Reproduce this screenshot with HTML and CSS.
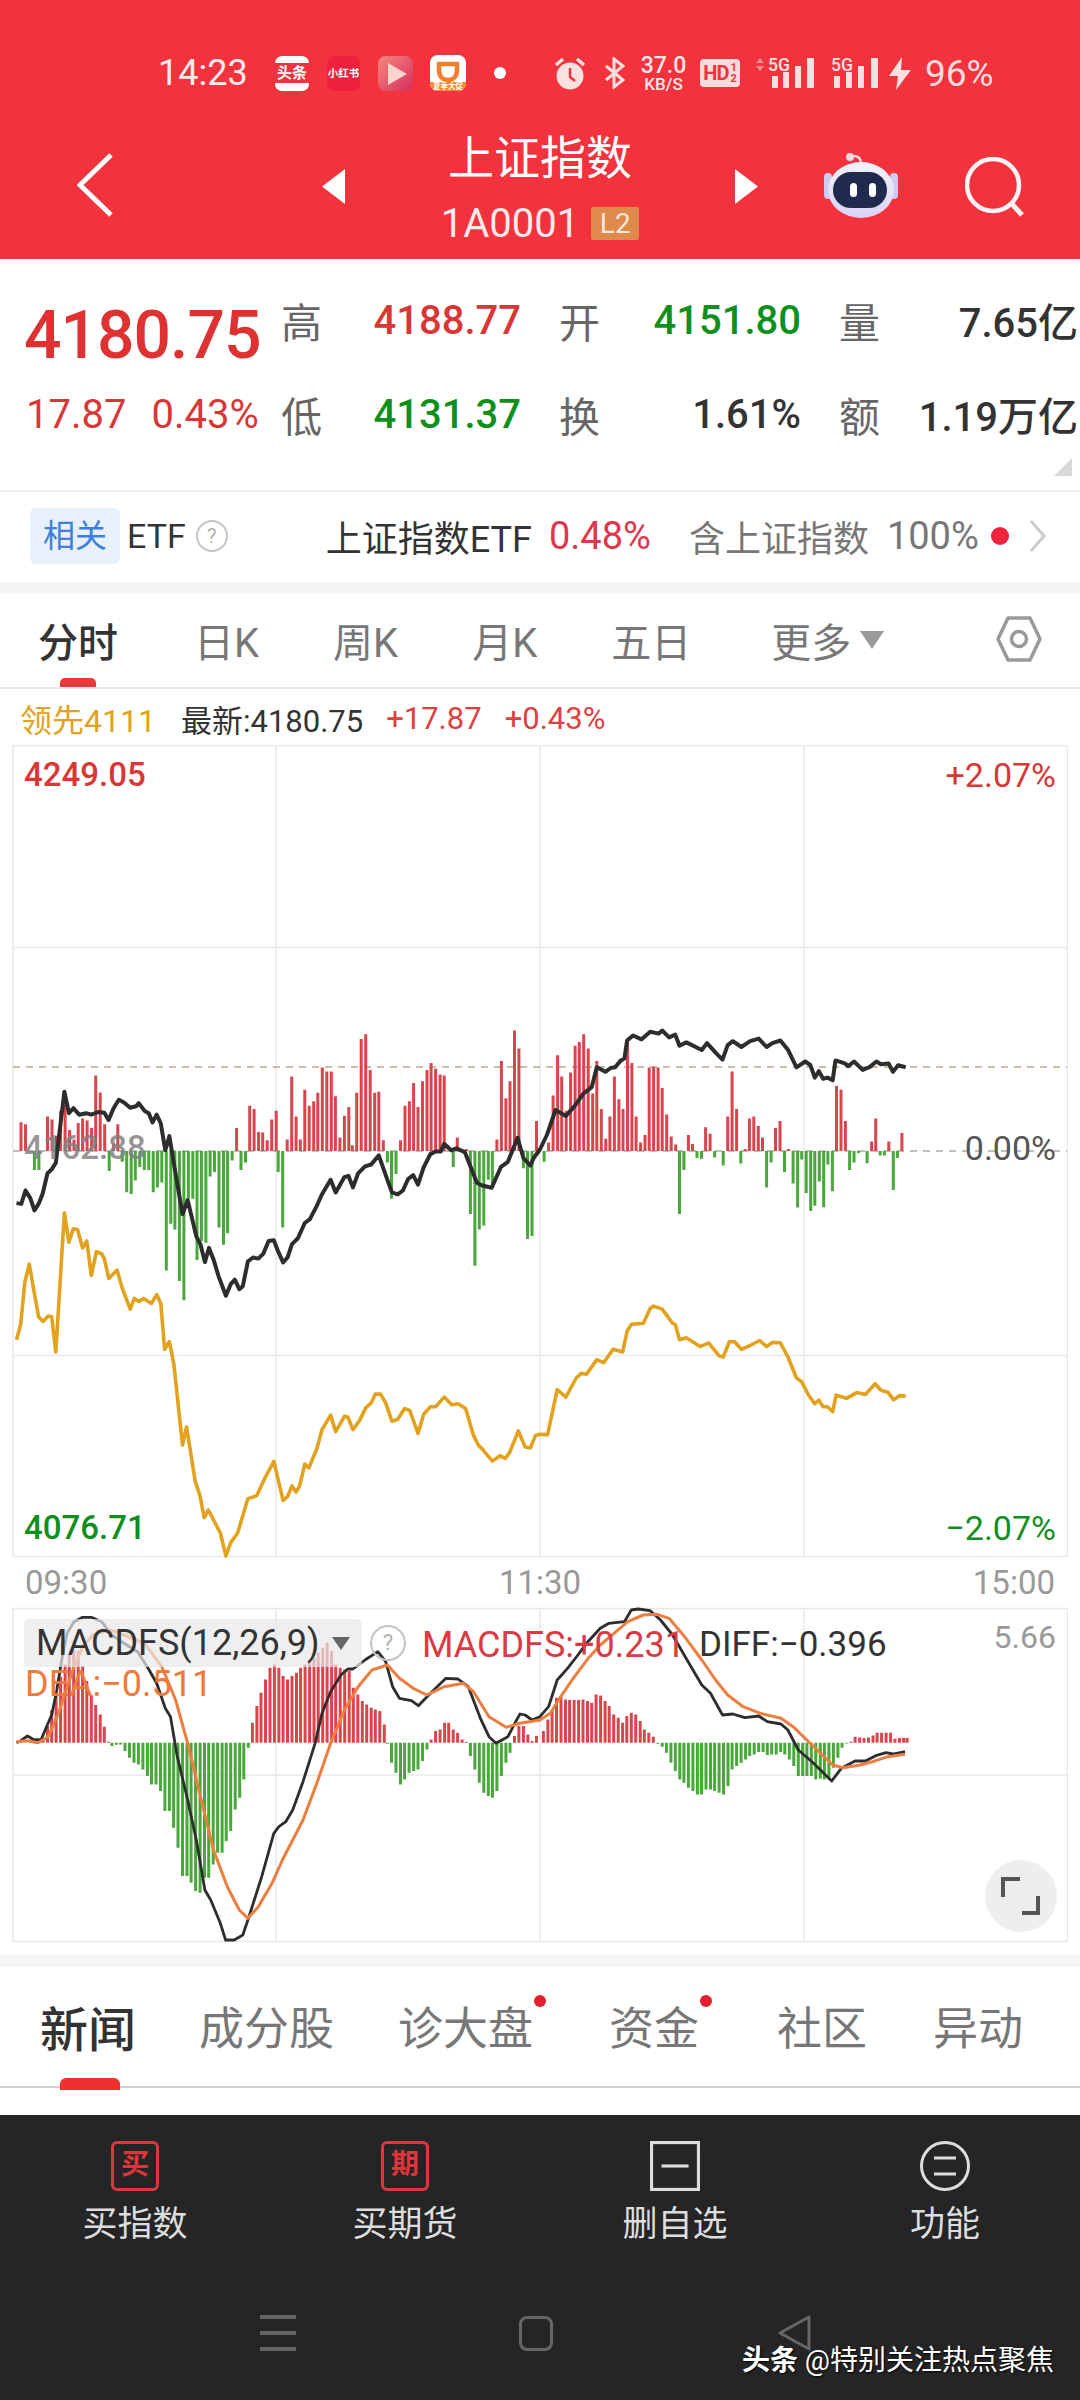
FILE: index.html
```html
<!DOCTYPE html>
<html lang="zh-CN">
<head>
    <meta charset="UTF-8">
    <meta name="viewport" content="width=device-width, initial-scale=1.0">
    <title>上证指数</title>
    <link rel="stylesheet" href="styles.css">
</head>
<body>
    <header class="header">
        <div class="statusbar">
            <span class="clock">14:23</span>
            <div class="app-toutiao"><span>头条</span></div>
            <div class="app-xhs">小红书</div>
            <svg class="app-play" viewBox="0 0 35 35">
                <defs>
                    <linearGradient id="playBg" x1="0" y1="0" x2="1" y2="1">
                        <stop offset="0" stop-color="#f8877c"/>
                        <stop offset="1" stop-color="#d42f5e"/>
                    </linearGradient>
                </defs>
                <rect width="35" height="35" rx="8" fill="url(#playBg)"/>
                <path d="M10 7 L29 18 L10 29 Z" fill="#fbd3cb"/>
            </svg>
            <svg class="app-didi" viewBox="0 0 36 36">
                <rect width="36" height="36" rx="8" fill="#fff"/>
                <path d="M9 9 H27 V15 C27 22 23 25 18 25 C13 25 9 22 9 15 Z" fill="none" stroke="#f2802e" stroke-width="4.5"/>
                <path d="M0 27 H36 V28 A8 8 0 0 1 28 36 H8 A8 8 0 0 1 0 28 Z" fill="#f2892e"/>
                <text x="18" y="34" text-anchor="middle" class="didi-text">夏季大促</text>
            </svg>
            <span class="status-dot"></span>
            <svg class="ic-alarm" viewBox="0 0 32 33">
                <circle cx="16" cy="19" r="13.5" fill="#fbe0e0"/>
                <path d="M16 11 V20 L21 24" fill="none" stroke="#f2323c" stroke-width="2.5"/>
                <path d="M2 8 L9 2 M30 8 L23 2" stroke="#fbe0e0" stroke-width="3.5" fill="none"/>
            </svg>
            <svg class="ic-bt" viewBox="0 0 21 32">
                <path d="M2 9 L19 23 L10 30 V2 L19 9 L2 23" fill="none" stroke="#fbe0e0" stroke-width="3"/>
            </svg>
            <div class="speed"><span class="speed-num">37.0</span><span class="speed-unit">KB/S</span></div>
            <div class="hd">HD<span class="hd-frac"><i>1</i><i>2</i></span></div>
            <svg class="ic-sig-a" viewBox="0 -6 60 38">
                <path d="M1 6 L5 1 L9 6 Z M1 9 L5 14 L9 9 Z" fill="#f78d92"/>
                <text x="13" y="14" class="sig-text" textLength="22" lengthAdjust="spacingAndGlyphs">5G</text>
                <rect x="17" y="19" width="6" height="12" fill="#fbe0e0"/>
                <rect x="28" y="15" width="6" height="16" fill="#fbe0e0"/>
                <rect x="40" y="9" width="6" height="22" fill="#fbe0e0"/>
                <rect x="52" y="1" width="7" height="30" fill="#fbe0e0"/>
            </svg>
            <svg class="ic-sig-b" viewBox="0 -6 47 38">
                <text x="0" y="14" class="sig-text" textLength="22" lengthAdjust="spacingAndGlyphs">5G</text>
                <rect x="3" y="19" width="6" height="12" fill="#fbe0e0"/>
                <rect x="15" y="15" width="6" height="16" fill="#fbe0e0"/>
                <rect x="27" y="9" width="6" height="22" fill="#fbe0e0"/>
                <rect x="40" y="1" width="7" height="30" fill="#fbe0e0"/>
            </svg>
            <svg class="ic-bolt" viewBox="0 0 24 33">
                <path d="M14 0 L1 19 H10 L8 33 L23 13 H13 Z" fill="#fbe0e0"/>
            </svg>
            <span class="battery">96%</span>
        </div>

        <div class="titlebar">
            <svg class="back" viewBox="0 0 36 64">
                <path d="M34 2 L3 32 L34 62" fill="none" stroke="#fff" stroke-width="5"/>
            </svg>
            <svg class="arrow arrow-left" viewBox="0 0 23 35"><path d="M23 0 V35 L0 17.5 Z" fill="#fff"/></svg>
            <div class="title-block">
                <div class="title">上证指数</div>
                <div class="code-row">
                    <span class="code">1A0001</span>
                    <span class="badge-l2">L2</span>
                </div>
            </div>
            <svg class="arrow" viewBox="0 0 23 35"><path d="M0 0 V35 L23 17.5 Z" fill="#fff"/></svg>
            <svg class="robot" viewBox="0 0 74 66">
                <defs>
                    <linearGradient id="robotHead" x1="0" y1="0" x2="0" y2="1">
                        <stop offset="0" stop-color="#f4f2fc"/>
                        <stop offset="1" stop-color="#d9d4f4"/>
                    </linearGradient>
                </defs>
                <circle cx="26" cy="5" r="4" fill="#f3d8e0"/>
                <path d="M29 4 C34 4 37 6 37 11" fill="none" stroke="#f3d8e0" stroke-width="2.5"/>
                <rect x="0" y="21" width="8" height="26" rx="4" fill="#cfcaf0"/>
                <rect x="66" y="21" width="8" height="26" rx="4" fill="#cfcaf0"/>
                <ellipse cx="37" cy="38" rx="33" ry="28" fill="url(#robotHead)"/>
                <rect x="9" y="20" width="54" height="36" rx="18" fill="#1f2a4e"/>
                <rect x="26" y="31" width="7" height="14" rx="3.5" fill="#fff"/>
                <rect x="45" y="31" width="7" height="14" rx="3.5" fill="#fff"/>
            </svg>
            <svg class="search" viewBox="0 0 60 60">
                <circle cx="28" cy="28" r="26" fill="none" stroke="#fff2f2" stroke-width="4.5"/>
                <path d="M47 47 L57 58" stroke="#fff2f2" stroke-width="5"/>
            </svg>
        </div>
    </header>

    <section class="quote">
        <div class="quote-grid">
            <div class="price-main">4180.75</div>
            <div class="q-label">高</div>
            <div class="q-val up">4188.77</div>
            <div class="q-label gap">开</div>
            <div class="q-val down">4151.80</div>
            <div class="q-label gap">量</div>
            <div class="q-val">7.65亿</div>

            <div class="price-change"><span>17.87</span><span>0.43%</span></div>
            <div class="q-label">低</div>
            <div class="q-val down">4131.37</div>
            <div class="q-label gap">换</div>
            <div class="q-val">1.61%</div>
            <div class="q-label gap">额</div>
            <div class="q-val">1.19万亿</div>
        </div>
        <span class="corner"></span>
    </section>

    <section class="etf-row">
        <span class="etf-tag">相关</span>
        <span class="etf-name">ETF</span>
        <span class="help help-sm">?</span>
        <span class="etf-title">上证指数ETF</span>
        <span class="etf-pct">0.48%</span>
        <span class="etf-note">含上证指数</span>
        <span class="etf-share">100%</span>
        <span class="etf-dot"></span>
        <svg class="etf-more" viewBox="0 0 17 32"><path d="M2 1 L15 16 L2 31" fill="none" stroke="#ccc" stroke-width="3"/></svg>
    </section>

    <div class="band"></div>

    <nav class="chart-tabs">
        <span class="chart-tab active">分时</span>
        <span class="chart-tab tab-day">日K</span>
        <span class="chart-tab">周K</span>
        <span class="chart-tab">月K</span>
        <span class="chart-tab tab-five">五日</span>
        <span class="chart-tab tab-more">更多<i class="more-arrow"></i></span>
        <svg class="hex" viewBox="0 0 46 46">
            <path d="M12 2 H34 L44 23 L34 44 H12 L2 23 Z" fill="none" stroke="#999" stroke-width="3.5" stroke-linejoin="round"/>
            <circle cx="23" cy="23" r="7.5" fill="none" stroke="#999" stroke-width="3.5"/>
        </svg>
    </nav>

    <div class="legend">
        <span class="legend-lead">领先4111</span>
        <span class="legend-last">最新:4180.75</span>
        <span class="legend-up">+17.87</span>
        <span class="legend-up">+0.43%</span>
    </div>

    <div class="chart chart-main">
        <svg class="chart-svg" width="1056" height="813" viewBox="12 745 1056 813">
            <g class="grid-lines">
                <path d="M13 745.5 H1067.5 V1556.5 H13 Z M13 947.5 H1067 M13 1355.5 H1067 M276 745 V1557 M540 745 V1557 M804 745 V1557"/>
            </g>
            <path class="dash-top" d="M13 1067 H1067"/>
            <path class="dash-mid" d="M13 1151 H1067"/>
            <path id="volUp" class="bar-up"/>
            <path id="volDown" class="bar-down"/>
            <polyline id="lineOrange" class="line-gold"/>
            <polyline id="lineBlack" class="line-black"/>
        </svg>
        <span class="label label-top up">4249.05</span>
        <span class="label label-top label-right up">+2.07%</span>
        <span class="label label-mid grey">4162.88</span>
        <span class="label label-mid label-right dark">0.00%</span>
        <span class="label label-low down">4076.71</span>
        <span class="label label-low label-right down">−2.07%</span>
    </div>

    <div class="time-axis">
        <span>09:30</span>
        <span>11:30</span>
        <span>15:00</span>
    </div>

    <div class="chart chart-macd">
        <svg class="chart-svg" width="1056" height="336" viewBox="12 1607 1056 336">
            <g class="grid-lines">
                <path d="M13 1608.5 H1067.5 V1941.5 H13 Z M13 1775 H1067 M276 1608 V1942 M540 1608 V1942 M804 1608 V1942"/>
            </g>
            <path id="macdUp" class="bar-up"/>
            <path id="macdDown" class="bar-down"/>
            <polyline id="macdBlack" class="line-thin-black"/>
            <polyline id="macdOrange" class="line-thin-orange"/>
        </svg>
        <div class="macd-pill">MACDFS(12,26,9)<i class="pill-arrow"></i></div>
        <span class="help help-lg">?</span>
        <span class="macd-val macd-fs">MACDFS:+0.231</span>
        <span class="macd-val macd-diff">DIFF:−0.396</span>
        <span class="macd-val macd-dea">DEA:−0.511</span>
        <span class="macd-max">5.66</span>
        <div class="expand">
            <svg viewBox="0 0 40 40" width="40" height="40">
                <path d="M2 21 V3 H19 M21 37 H37 V20" fill="none" stroke="#555" stroke-width="4"/>
            </svg>
        </div>
    </div>

    <div class="band band-low"></div>

    <nav class="news-tabs">
        <span class="news-tab active">新闻</span>
        <span class="news-tab">成分股</span>
        <span class="news-tab has-dot">诊大盘</span>
        <span class="news-tab has-dot">资金</span>
        <span class="news-tab">社区</span>
        <span class="news-tab">异动</span>
    </nav>

    <footer class="bottom">
        <div class="actions">
            <div class="action">
                <span class="action-box">买</span>
                <span class="action-label">买指数</span>
            </div>
            <div class="action">
                <span class="action-box">期</span>
                <span class="action-label">买期货</span>
            </div>
            <div class="action">
                <svg class="action-svg" viewBox="0 0 48 48">
                    <rect x="1.5" y="1.5" width="45" height="45" fill="none" stroke="#ddd" stroke-width="3"/>
                    <path d="M11 24 H37" stroke="#ddd" stroke-width="3"/>
                </svg>
                <span class="action-label">删自选</span>
            </div>
            <div class="action">
                <svg class="action-svg" viewBox="0 0 50 50">
                    <circle cx="25" cy="25" r="23.5" fill="none" stroke="#ddd" stroke-width="3"/>
                    <path d="M14 17 H36 M14 33 H36" stroke="#ddd" stroke-width="3"/>
                </svg>
                <span class="action-label">功能</span>
            </div>
        </div>
        <div class="sysnav">
            <svg class="sys-menu" viewBox="0 0 36 36"><path d="M0 2 H36 M0 18 H36 M0 34 H36" stroke="#666" stroke-width="4"/></svg>
            <span class="sys-home"></span>
            <svg class="sys-back" viewBox="0 0 34 36"><path d="M32 2 V34 L3 18 Z" fill="none" stroke="#666" stroke-width="3" stroke-linejoin="round"/></svg>
        </div>
        <div class="watermark"><b>头条</b> @特别关注热点聚焦</div>
    </footer>

    <script src="chart.js"></script>
</body>
</html>
```

FILE: styles.css
```css
* {
    box-sizing: border-box;
}

body {
    margin: 0;
    width: 1080px;
    background-color: #fff;
    color: #333;
    font-family: Roboto, "Noto Sans CJK SC", sans-serif;
}

i {
    font-style: normal;
}

.up {
    color: #d93636;
}

.down {
    color: #0f8f1c;
}

/* header */
.header {
    height: 259px;
    padding-top: 50px;
    background-color: #f2323c;
    color: #fff;
}

.statusbar {
    display: flex;
    align-items: center;
    height: 46px;
    padding-left: 158px;
}

.clock {
    width: 91px;
    font-size: 36px;
    color: #fdeaea;
}

.app-toutiao {
    display: flex;
    align-items: center;
    width: 34px;
    height: 35px;
    margin-left: 26px;
    background-color: #fff;
    border-radius: 7px;
    overflow: hidden;
}

.app-toutiao span {
    width: 100%;
    height: 20px;
    background-color: #ee3340;
    font-size: 15px;
    font-weight: 700;
    line-height: 20px;
    text-align: center;
    white-space: nowrap;
}

.app-xhs {
    width: 33px;
    height: 35px;
    margin-left: 18px;
    background-color: #f0213f;
    border-radius: 7px;
    font-size: 10.5px;
    font-weight: 700;
    line-height: 35px;
    text-align: center;
    white-space: nowrap;
}

.app-play {
    width: 35px;
    height: 35px;
    margin-left: 18px;
}

.app-didi {
    width: 36px;
    height: 36px;
    margin-left: 17px;
}

.didi-text {
    font-size: 7.5px;
    font-weight: 700;
    fill: #fff;
}

.status-dot {
    width: 12px;
    height: 12px;
    margin-left: 28px;
    background-color: #fff;
    border-radius: 50%;
}

.ic-alarm {
    width: 32px;
    height: 33px;
    margin-left: 48px;
}

.ic-bt {
    width: 21px;
    height: 32px;
    margin-left: 18px;
}

.speed {
    display: flex;
    flex-direction: column;
    align-items: center;
    width: 45px;
    margin-left: 16px;
    color: #fbe6e6;
}

.speed-num {
    font-size: 23px;
    font-weight: 500;
    line-height: 22px;
}

.speed-unit {
    font-size: 17px;
    font-weight: 500;
    line-height: 14px;
}

.hd {
    display: flex;
    align-items: center;
    justify-content: center;
    width: 40px;
    height: 28px;
    margin-left: 14px;
    background-color: #fbdcdc;
    border-radius: 4px;
    color: #f2323c;
    font-size: 20px;
    font-weight: 700;
    letter-spacing: -1px;
}

.hd-frac {
    display: flex;
    flex-direction: column;
    margin-left: 2px;
    font-size: 11px;
    line-height: 11px;
    letter-spacing: 0;
}

.ic-sig-a {
    width: 60px;
    height: 38px;
    margin-left: 15px;
    margin-top: -6px;
}

.ic-sig-b {
    width: 47px;
    height: 38px;
    margin-left: 16px;
    margin-top: -6px;
}

.sig-text {
    font-size: 18px;
    font-weight: 500;
    fill: #fbe0e0;
}

.ic-bolt {
    width: 24px;
    height: 33px;
    margin-left: 10px;
}

.battery {
    margin-left: 13px;
    font-size: 37px;
    color: #fbdcdc;
}

.titlebar {
    display: flex;
    align-items: flex-start;
    height: 159px;
    margin-top: 4px;
    padding-left: 77px;
}

.back {
    flex: none;
    width: 36px;
    height: 64px;
    margin-top: 53px;
}

.arrow {
    flex: none;
    width: 23px;
    height: 35px;
    margin-top: 69px;
}

.arrow-left {
    margin-left: 209px;
}

.title-block {
    flex: none;
    width: 390px;
    margin-top: 32px;
    text-align: center;
}

.title {
    font-size: 46px;
    line-height: 52px;
}

.code-row {
    display: flex;
    align-items: center;
    justify-content: center;
    gap: 12px;
    height: 34px;
    margin-top: 22px;
}

.code {
    font-size: 40px;
    color: #fdeaea;
}

.badge-l2 {
    width: 48px;
    height: 33px;
    background-color: #dd8a4c;
    border-radius: 2px;
    font-size: 28px;
    line-height: 33px;
    color: #fbe6d8;
}

.robot {
    flex: none;
    width: 74px;
    height: 66px;
    margin-left: 66px;
    margin-top: 52px;
}

.search {
    flex: none;
    width: 60px;
    height: 60px;
    margin-left: 67px;
    margin-top: 57px;
}

/* quote block */
.quote {
    position: relative;
    height: 233px;
    padding: 14px 0 0 24px;
    border-bottom: 2px solid #ececec;
}

.quote-grid {
    display: grid;
    grid-template-columns: 257px 41px 199px 80px 200px 79px 198px;
    grid-template-rows: 94px 94px;
    align-items: center;
}

.q-label {
    font-size: 41px;
    color: #666;
    white-space: nowrap;
}

.q-label.gap {
    margin-left: 38px;
    margin-right: -38px;
}

.q-val {
    font-size: 40px;
    font-weight: 500;
    text-align: right;
    white-space: nowrap;
}

.price-main {
    margin-top: 31px;
    font-size: 66px;
    font-weight: 500;
    line-height: 64px;
    letter-spacing: -1px;
    color: #de3232;
    white-space: nowrap;
}

.price-change {
    display: flex;
    gap: 25px;
    padding-left: 2px;
    font-size: 40px;
    font-weight: 400;
    color: #d93636;
    white-space: nowrap;
}

.corner {
    position: absolute;
    right: 8px;
    bottom: 14px;
    border-left: 18px solid transparent;
    border-bottom: 18px solid #d8d8d8;
}

/* etf row */
.etf-row {
    display: flex;
    align-items: center;
    height: 90px;
    padding: 0 0 2px 30px;
    white-space: nowrap;
}

.etf-tag {
    width: 90px;
    height: 56px;
    background-color: #e8f0fb;
    border-radius: 6px;
    font-size: 32px;
    line-height: 56px;
    text-align: center;
    color: #3f7fdf;
}

.etf-name {
    margin-left: 7px;
    font-size: 34px;
    color: #333;
}

.help {
    display: block;
    border: 2px solid #c4c4c4;
    border-radius: 50%;
    text-align: center;
    color: #b0b0b0;
}

.help-sm {
    width: 32px;
    height: 32px;
    margin-left: 10px;
    font-size: 20px;
    line-height: 28px;
}

.etf-title {
    margin-left: 98px;
    font-size: 36px;
    color: #333;
}

.etf-pct {
    margin-left: 17px;
    font-size: 38px;
    color: #e0364e;
}

.etf-note {
    margin-left: 38px;
    font-size: 36px;
    color: #777;
}

.etf-share {
    margin-left: 18px;
    font-size: 38px;
    color: #777;
}

.etf-dot {
    width: 18px;
    height: 18px;
    margin-left: 12px;
    background-color: #f0233a;
    border-radius: 50%;
}

.etf-more {
    width: 17px;
    height: 32px;
    margin-left: 20px;
}

.band {
    height: 11px;
    background-color: #f5f5f5;
}

/* chart tabs */
.chart-tabs {
    display: flex;
    align-items: center;
    gap: 74px;
    height: 96px;
    padding-left: 38px;
    border-bottom: 2px solid #eaeaea;
}

.chart-tab {
    position: relative;
    font-size: 40px;
    color: #777;
    white-space: nowrap;
}

.chart-tab.active {
    color: #333;
    font-weight: 500;
}

.chart-tab.active::after {
    content: "";
    position: absolute;
    left: 22px;
    bottom: -18px;
    width: 36px;
    height: 9px;
    background-color: #e83a3a;
    border-radius: 5px 5px 0 0;
}

.tab-day {
    margin-left: 2px;
}

.tab-five {
    margin-left: 0;
}

.tab-more {
    display: flex;
    align-items: center;
    margin-left: 6px;
}

.more-arrow {
    width: 0;
    height: 0;
    margin: 0 0 0 9px;
    border-left: 12px solid transparent;
    border-right: 12px solid transparent;
    border-top: 18px solid #999;
}

.hex {
    width: 46px;
    height: 46px;
    margin-left: 38px;
    margin-top: -2px;
}

/* legend */
.legend {
    display: flex;
    align-items: center;
    height: 56px;
    padding: 2px 0 0 20px;
    font-size: 31px;
    white-space: nowrap;
}

.legend-lead {
    font-size: 32px;
    color: #e2a21e;
}

.legend-last {
    margin-left: 25px;
    color: #333;
}

.legend-up {
    margin-left: 23px;
    color: #e04040;
}

/* charts */
.chart {
    position: relative;
    width: 1056px;
    margin-left: 12px;
}

.chart-main {
    height: 813px;
}

.chart-macd {
    height: 336px;
}

.chart-svg {
    display: block;
}

.grid-lines path {
    fill: none;
    stroke: #e8e8e8;
    stroke-width: 1.5;
}

.dash-top {
    fill: none;
    stroke: #b9a98a;
    stroke-width: 1.5;
    stroke-dasharray: 7 6;
}

.dash-mid {
    fill: none;
    stroke: #aaa;
    stroke-width: 1.5;
    stroke-dasharray: 7 6;
}

.bar-up {
    fill: none;
    stroke: #d9454d;
    stroke-width: 3;
}

.bar-down {
    fill: none;
    stroke: #48a83a;
    stroke-width: 3;
}

.line-black,
.line-gold,
.line-thin-black,
.line-thin-orange {
    fill: none;
    stroke-linejoin: round;
}

.line-black {
    stroke: #2d2d2d;
    stroke-width: 4;
}

.line-gold {
    stroke: #e2a21e;
    stroke-width: 3.6;
}

.line-thin-black {
    stroke: #2d2d2d;
    stroke-width: 2.8;
}

.line-thin-orange {
    stroke: #ee7d40;
    stroke-width: 3;
}

.label {
    position: absolute;
    left: 12px;
    font-size: 33px;
    font-weight: 500;
    line-height: 40px;
    white-space: nowrap;
}

.label-right {
    left: auto;
    right: 12px;
    font-size: 34px;
    font-weight: 400;
}

.label-top {
    top: 10px;
}

.label-mid {
    top: 383px;
}

.label-low {
    top: 763px;
}

.grey {
    color: rgba(130, 130, 130, 0.85);
}

.dark {
    color: #555;
}

.time-axis {
    display: flex;
    justify-content: space-between;
    height: 49px;
    padding: 0 25px;
    font-size: 33px;
    line-height: 49px;
    color: #999;
}

.macd-pill {
    position: absolute;
    left: 12px;
    top: 12px;
    display: flex;
    align-items: center;
    width: 338px;
    height: 48px;
    padding-left: 12px;
    background-color: rgba(232, 232, 232, 0.7);
    border-radius: 5px;
    font-size: 36px;
    color: #333;
    white-space: nowrap;
}

.pill-arrow {
    margin-left: 12px;
    border-left: 9px solid transparent;
    border-right: 9px solid transparent;
    border-top: 13px solid #666;
}

.help-lg {
    position: absolute;
    left: 358px;
    top: 18px;
    width: 36px;
    height: 36px;
    font-size: 22px;
    line-height: 32px;
}

.macd-val {
    position: absolute;
    font-size: 36px;
    line-height: 40px;
    white-space: nowrap;
}

.macd-fs {
    left: 410px;
    top: 18px;
    color: #d93a44;
}

.macd-diff {
    left: 687px;
    top: 18px;
    font-size: 35px;
    color: #333;
}

.macd-dea {
    left: 13px;
    top: 57px;
    color: #ee7a3c;
}

.macd-max {
    position: absolute;
    right: 12px;
    top: 10px;
    font-size: 32px;
    line-height: 40px;
    color: #999;
}

.expand {
    position: absolute;
    left: 973px;
    top: 253px;
    display: flex;
    align-items: center;
    justify-content: center;
    width: 72px;
    height: 72px;
    background-color: #eee;
    border-radius: 50%;
}

.band-low {
    height: 12px;
    margin-top: 12px;
}

/* news tabs */
.news-tabs {
    display: flex;
    align-items: center;
    height: 121px;
    padding: 0 0 2px 40px;
    border-bottom: 2px solid #cfcfcf;
    white-space: nowrap;
}

.news-tab {
    position: relative;
    margin-right: 66px;
    font-size: 45px;
    color: #777;
}

.news-tab:nth-child(2) {
    margin-right: 64px;
}

.news-tab:nth-child(3) {
    margin-right: 76px;
}

.news-tab:nth-child(4) {
    margin-right: 78px;
}

.news-tab:nth-child(5) {
    margin-right: 66px;
}

.news-tab.active {
    margin-right: 63px;
    font-size: 48px;
    color: #333;
    font-weight: 500;
}

.news-tab.active::after {
    content: "";
    position: absolute;
    left: 20px;
    bottom: -29px;
    width: 60px;
    height: 12px;
    background-color: #f0302e;
    border-radius: 6px 6px 0 0;
}

.news-tab.has-dot::after {
    content: "";
    position: absolute;
    right: -13px;
    top: 2px;
    width: 12px;
    height: 12px;
    background-color: #e0202c;
    border-radius: 50%;
}

/* bottom bar */
.bottom {
    position: relative;
    height: 285px;
    margin-top: 27px;
    background-color: #252525;
}

.actions {
    display: grid;
    grid-template-columns: repeat(4, 270px);
    height: 200px;
    padding-top: 26px;
}

.action {
    display: flex;
    flex-direction: column;
    align-items: center;
}

.action-box {
    width: 48px;
    height: 50px;
    border: 3px solid #d8383e;
    border-radius: 6px;
    font-size: 28px;
    font-weight: 700;
    line-height: 42px;
    text-align: center;
    color: #e0343c;
}

.action-svg {
    width: 50px;
    height: 50px;
}

.action-label {
    margin-top: 12px;
    font-size: 35px;
    line-height: 44px;
    color: #ddd;
}

.sysnav {
    display: flex;
    align-items: center;
    height: 36px;
    padding-left: 260px;
}

.sys-menu {
    width: 36px;
    height: 36px;
}

.sys-home {
    width: 34px;
    height: 35px;
    margin-left: 223px;
    border: 3px solid #666;
    border-radius: 8px;
}

.sys-back {
    width: 34px;
    height: 36px;
    margin-left: 224px;
}

.watermark {
    position: absolute;
    right: 26px;
    top: 227px;
    font-size: 28px;
    line-height: 38px;
    color: #fff;
    text-shadow: 1px 1px 2px #000;
    white-space: nowrap;
}
```

FILE: chart.js
```js
// series below are read off the picture at 2.904 px per x unit
const SX = 2.904;

function toX(x, half) {
    return (half === 1 ? 540 : 0) + x / SX;
}

function parse(str) {
    return str.trim().split(/\s+/).map(function (p) {
        return p.split(',').map(Number);
    });
}

function linePoints(left, right, yOf) {
    const a = parse(left).map(function (p) {
        return toX(p[0], 0).toFixed(1) + ',' + yOf(p[1]).toFixed(1);
    });
    const b = parse(right).map(function (p) {
        return toX(p[0], 1).toFixed(1) + ',' + yOf(p[1]).toFixed(1);
    });
    return a.concat(b).join(' ');
}

function drawBars(left, right, base, sy, upId, downId) {
    let up = '';
    let down = '';
    [left, right].forEach(function (list, half) {
        parse(list).forEach(function (p) {
            const seg = 'M' + toX(p[0], half).toFixed(1) + ' ' + base + 'V' + (base - p[1] / sy).toFixed(1);
            if (p[1] > 0) {
                up += seg;
            } else {
                down += seg;
            }
        });
    });
    document.getElementById(upId).setAttribute('d', up);
    document.getElementById(downId).setAttribute('d', down);
}

// price panel
const mainY = function (y) { return 980 + y / 2.613; };

document.getElementById('lineBlack').setAttribute('points', linePoints(
    '48,583 62,585 74,550 88,570 100,602 112,585 124,558 138,505 150,495 162,478 175,380 187,292 200,348 213,335 230,352 250,348 265,352 285,345 303,347 315,366 330,335 345,313 360,320 378,334 395,330 403,322 420,342 432,348 443,372 455,352 467,375 480,445 492,408 505,480 530,612 545,575 570,670 582,690 595,737 607,700 620,730 635,775 656,825 670,795 682,783 695,808 705,800 720,735 735,725 750,728 765,715 780,682 795,680 808,710 822,738 835,725 848,690 865,675 885,635 900,625 920,590 935,560 960,522 975,555 1000,515 1012,512 1025,542 1040,505 1060,487 1078,482 1100,458 1120,510 1138,555 1155,560 1170,550 1185,520 1200,510 1214,535 1230,490 1250,455 1265,448 1280,448 1290,428 1310,445 1325,440 1350,450 1385,530 1400,537 1428,543 1455,488 1475,475 1503,412 1520,465 1540,485 1550,465 1568,443',
    '20,405 45,340 75,355 100,330 125,298 150,280 165,228 190,240 205,230 218,228 235,210 245,205 253,158 270,145 295,155 320,135 345,140 355,132 375,150 393,143 405,172 425,163 470,183 485,165 510,190 530,208 545,170 560,160 585,175 610,160 635,153 658,175 675,165 698,158 720,182 745,228 770,213 785,222 798,255 810,238 822,258 835,255 850,262 858,210 885,218 895,225 912,213 937,235 958,227 977,213 990,220 1012,218 1025,240 1040,223 1062,228',
    mainY
));

document.getElementById('lineOrange').setAttribute('points', linePoints(
    '48,940 60,900 72,790 85,742 100,820 112,880 125,892 140,878 150,880 162,972 187,608 200,685 213,650 225,652 240,700 252,682 265,772 280,710 295,715 303,728 316,780 340,758 355,805 378,860 390,832 403,840 417,832 440,845 455,822 467,845 478,965 492,945 505,1005 530,1215 542,1168 567,1310 580,1345 593,1405 605,1385 640,1445 656,1505 670,1470 690,1445 720,1355 745,1348 770,1300 795,1258 822,1360 835,1350 848,1322 860,1338 870,1322 885,1265 897,1275 920,1225 935,1175 960,1137 975,1180 1000,1140 1010,1142 1025,1175 1045,1150 1062,1118 1078,1105 1090,1082 1105,1082 1120,1105 1138,1153 1155,1148 1175,1120 1190,1125 1214,1185 1230,1135 1250,1115 1265,1115 1290,1090 1312,1110 1330,1107 1352,1120 1375,1190 1390,1217 1400,1225 1430,1257 1452,1243 1467,1250 1480,1235 1505,1178 1525,1220 1540,1223 1555,1190 1568,1187',
    '22,1188 50,1070 75,1090 105,1040 120,1028 135,1030 165,992 185,1000 212,965 240,972 253,918 265,900 300,897 320,858 330,852 355,860 385,897 393,900 405,940 425,935 465,958 490,948 520,982 532,985 550,945 565,945 585,965 610,955 638,942 658,958 675,947 698,948 720,985 745,1040 760,1050 780,1085 798,1107 810,1098 822,1115 835,1115 850,1128 860,1085 890,1093 920,1078 945,1083 973,1055 990,1072 1010,1077 1027,1097 1045,1086 1062,1087',
    mainY
));

drawBars(
    '61,75 74,70 100,-50 113,-50 138,90 151,82 164,40 176,105 189,120 202,55 215,30 227,73 240,85 253,80 266,60 278,197 291,153 304,70 317,-52 330,20 342,70 355,-28 368,-108 381,-112 393,-77 406,-42 419,-50 432,-50 445,-108 457,-95 470,-82 483,-312 496,-190 508,-205 521,-340 534,-390 547,-125 560,-125 572,-285 585,-235 598,-240 610,-67 623,-55 636,-200 649,-245 661,-215 674,-25 687,60 700,-50 713,-30 725,118 738,110 751,50 763,48 776,28 789,82 802,105 808,-55 821,-200 834,30 847,195 860,90 872,30 885,160 898,118 911,130 923,152 936,218 949,208 962,208 974,143 987,35 1000,92 1013,115 1023,15 1036,152 1049,293 1062,305 1075,212 1088,152 1100,155 1113,28 1125,-30 1137,-125 1150,-60 1163,28 1176,118 1189,130 1201,178 1214,115 1227,182 1240,212 1252,230 1265,215 1278,200 1290,197 1316,-42 1328,35 1354,5 1366,-165 1379,-300 1392,-205 1405,-195 1418,-75 1430,-95 1443,30 1456,235 1469,138 1481,182 1494,315 1507,268 1520,-45 1532,-230 1545,-222 1558,78',
    '12,-28 25,22 38,145 51,250 63,195 76,105 89,205 102,275 114,285 127,305 140,268 153,150 165,235 178,110 191,32 203,90 216,195 229,135 241,110 254,285 267,230 279,90 292,22 305,42 317,218 330,220 343,218 355,165 368,95 381,38 394,17 405,-165 418,-50 431,42 443,18 456,-18 469,-20 481,62 494,45 507,-17 532,-38 545,90 558,208 571,110 583,-33 596,5 608,85 621,90 634,65 646,35 658,-95 671,-30 684,60 697,78 710,-55 722,5 735,-85 748,-148 760,-22 773,-110 786,-157 798,-143 811,-80 824,-147 836,-35 849,-105 861,170 874,160 887,78 899,-50 912,-30 925,-5 950,-32 963,25 975,85 988,-12 1000,-12 1013,25 1026,-102 1038,-18 1051,47',
    1151, 2.613, 'volUp', 'volDown'
);

// macd panel
const macdY = function (y) { return 1580 + y / 3; };

document.getElementById('macdBlack').setAttribute('points', linePoints(
    '48,488 60,482 80,468 100,480 120,478 135,440 150,405 165,330 180,235 195,160 215,125 240,112 265,112 295,125 325,165 360,190 400,215 430,265 455,310 480,385 495,410 515,530 545,660 570,780 595,930 612,960 640,1030 655,1080 680,1080 705,1065 720,1020 760,890 795,760 810,740 830,725 850,690 880,605 915,490 935,400 960,335 990,285 1010,267 1025,267 1060,240 1097,215 1120,245 1140,320 1160,355 1195,362 1215,377 1245,345 1265,325 1295,295 1330,297 1360,320 1395,415 1420,470 1440,490 1475,470 1495,430 1510,402 1525,405 1545,420 1568,410',
    '25,380 50,300 80,265 110,225 135,190 175,145 200,130 245,125 265,90 285,87 320,92 350,120 385,165 430,245 470,315 495,340 530,405 560,402 595,413 635,408 660,425 700,432 720,450 750,510 790,545 847,603 875,565 915,543 945,543 975,527 1005,518 1025,522 1060,515',
    macdY
));

document.getElementById('macdOrange').setAttribute('points', linePoints(
    '48,485 80,482 110,488 140,470 170,400 195,320 215,260 240,200 270,165 320,150 360,165 420,190 470,260 510,360 545,490 580,640 620,810 660,920 695,990 720,1015 750,980 790,910 820,840 880,720 920,610 960,490 1000,390 1040,320 1080,270 1125,255 1160,295 1200,325 1240,345 1290,320 1345,310 1375,335 1420,410 1470,442 1510,430 1568,420',
    '30,400 60,350 100,290 140,235 175,195 215,160 255,125 300,105 340,103 375,115 420,170 470,240 510,300 545,345 590,380 640,400 700,415 735,440 790,495 850,555 880,563 930,555 975,542 1010,530 1060,523',
    macdY
));

drawBars(
    '125,10 138,50 150,98 163,143 176,198 189,235 201,265 214,278 227,275 240,230 252,185 265,143 278,113 291,85 303,48 315,3 325,-10 338,-6 350,-5 363,-25 376,-45 389,-60 402,-65 415,-80 428,-100 440,-125 453,-125 466,-145 479,-205 492,-205 504,-255 517,-315 530,-400 543,-400 555,-420 568,-445 581,-450 594,-405 606,-405 619,-365 632,-330 645,-330 657,-295 670,-265 683,-200 696,-165 708,-110 721,-15 733,60 746,110 758,150 771,190 784,225 797,235 810,225 822,200 835,190 848,200 861,210 873,225 886,235 899,245 912,255 924,270 937,285 950,300 963,275 975,235 988,225 1001,220 1014,215 1026,165 1039,145 1052,125 1065,115 1078,105 1090,100 1103,95 1116,55 1125,-3 1137,-60 1150,-90 1163,-125 1175,-110 1188,-90 1201,-85 1214,-80 1227,-55 1240,-20 1252,10 1265,35 1278,40 1291,60 1303,60 1316,40 1329,30 1342,10 1354,2 1366,-40 1379,-80 1392,-120 1405,-150 1418,-160 1430,-165 1443,-145 1456,-100 1469,-60 1481,-30 1494,20 1507,50 1520,50 1533,25 1545,5 1558,20',
    '10,35 23,70 35,95 48,135 61,140 74,130 86,128 99,128 112,128 125,130 138,125 150,120 163,145 176,142 189,125 201,110 214,85 227,75 240,60 252,80 265,90 278,85 291,65 303,40 316,30 329,18 342,-3 355,-12 367,-30 380,-60 393,-85 406,-110 418,-120 431,-135 444,-145 457,-155 469,-155 482,-140 495,-140 507,-145 520,-150 533,-155 546,-130 558,-80 571,-70 584,-60 597,-50 609,-40 622,-35 635,-28 648,-28 660,-37 673,-35 686,-35 699,-28 711,-35 724,-50 737,-70 750,-100 763,-100 775,-100 788,-100 801,-110 814,-108 826,-110 839,-110 852,-75 865,-45 877,-15 890,-2 903,3 915,18 928,16 941,14 954,16 967,22 979,30 992,30 1005,30 1018,30 1031,12 1044,14 1056,15 1066,14',
    1742.7, 3, 'macdUp', 'macdDown'
);
```
